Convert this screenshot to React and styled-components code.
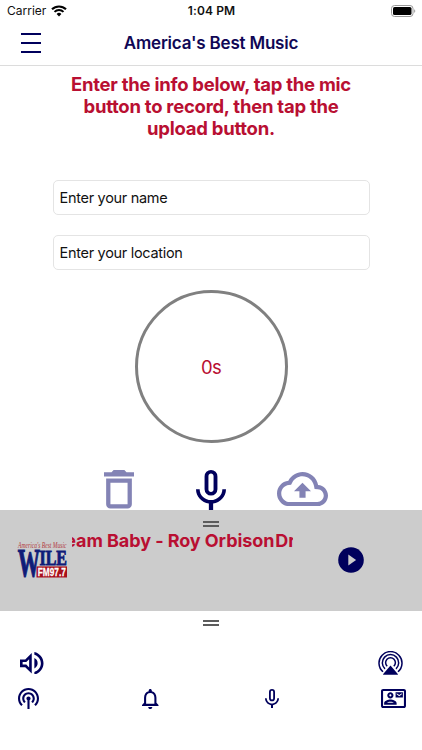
import React, { useState } from "react";
import styled, { createGlobalStyle } from "styled-components";

const navy = "#00005c";
const red = "#b90f32";

const GlobalStyle = createGlobalStyle`
  * {
    box-sizing: border-box;
  }

  body {
    margin: 0;
    background-color: #fff;
    font-family: Inter, "Liberation Sans", sans-serif;
  }
`;

const Icon = ({ d, box, width, height }) => (
  <svg viewBox={box} width={width} height={height} fill="currentColor" preserveAspectRatio="none">
    <path fillRule="evenodd" d={d} />
  </svg>
);

const micPath =
  "M17.3 11c0 3-2.54 5.1-5.3 5.1S6.7 14 6.7 11H5c0 3.41 2.72 6.23 6 6.72V21h2v-3.28c3.28-.49 6-3.31 6-6.72M10.8 4.9c0-.66.54-1.2 1.2-1.2s1.2.54 1.2 1.2l-.01 6.2c0 .66-.53 1.2-1.19 1.2s-1.2-.54-1.2-1.2M12 14a3 3 0 0 0 3-3V5a3 3 0 0 0-6 0v6a3 3 0 0 0 3 3z";
const trashPath =
  "M6 19c0 1.1.9 2 2 2h8c1.1 0 2-.9 2-2V7H6v12zM8 9h8v10H8V9zm7.5-5l-1-1h-5l-1 1H5v2h14V4z";
const uploadPath =
  "M19.35 10.04C18.67 6.59 15.64 4 12 4 9.11 4 6.6 5.64 5.35 8.04 2.34 8.36 0 10.91 0 14c0 3.31 2.69 6 6 6h13c2.76 0 5-2.24 5-5 0-2.64-2.05-4.78-4.65-4.96zM19 18H6c-2.21 0-4-1.79-4-4 0-2.05 1.53-3.76 3.56-3.97l1.07-.11.5-.95C8.08 7.14 9.94 6 12 6c2.62 0 4.88 1.86 5.39 4.43l.3 1.5 1.53.11c1.56.1 2.78 1.41 2.78 2.96 0 1.65-1.35 3-3 3zM8 13h2.55v3h2.9v-3H16l-4-4z";
const volumePath =
  "M3 9v6h4l5 5V4L7 9H3zm7-.17v6.34L7.83 13H5v-2h2.83L10 8.83zM16.5 12A4.5 4.5 0 0 0 14 7.97v8.05c1.48-.73 2.5-2.25 2.5-4.02zM14 3.23v2.06c2.89.86 5 3.54 5 6.71s-2.11 5.85-5 6.71v2.06c4.01-.91 7-4.49 7-8.77 0-4.28-2.99-7.86-7-8.77z";
const podcastPath =
  "M14 12c0 .74-.4 1.38-1 1.72V22h-2v-8.28c-.6-.35-1-.98-1-1.72 0-1.1.9-2 2-2s2 .9 2 2zm-2-6c-3.31 0-6 2.69-6 6 0 1.74.75 3.31 1.94 4.4l1.42-1.42C8.53 14.25 8 13.19 8 12c0-2.21 1.79-4 4-4s4 1.79 4 4c0 1.19-.53 2.25-1.36 2.98l1.42 1.42C17.25 15.31 18 13.74 18 12c0-3.31-2.69-6-6-6zm0-4C6.48 2 2 6.48 2 12c0 2.85 1.2 5.41 3.11 7.24l1.42-1.42C4.98 16.36 4 14.29 4 12c0-4.41 3.59-8 8-8s8 3.59 8 8c0 2.29-.98 4.36-2.53 5.82l1.42 1.42C20.8 17.41 22 14.85 22 12c0-5.52-4.48-10-10-10z";
const bellPath =
  "M12 22c1.1 0 2-.9 2-2h-4c0 1.1.9 2 2 2zm6-6v-5c0-3.07-1.63-5.64-4.5-6.32V4c0-.83-.67-1.5-1.5-1.5s-1.5.67-1.5 1.5v.68C7.64 5.36 6 7.92 6 11v5l-2 2v1h16v-1l-2-2zm-2 1H8v-6c0-2.48 1.51-4.5 4-4.5s4 2.02 4 4.5v6z";
const contactPath =
  "M22 3H2C.9 3 0 3.9 0 5v14c0 1.1.9 2 2 2h20c1.1 0 1.99-.9 1.99-2L24 5c0-1.1-.9-2-2-2zm0 16H2V5h20v14zM21 6h-7v5h7V6zm-1 2l-2.5 1.75L15 8V7l2.5 1.75L20 7v1zM9 12c1.65 0 3-1.35 3-3s-1.35-3-3-3-3 1.35-3 3 1.35 3 3 3zm0-4c.55 0 1 .45 1 1s-.45 1-1 1-1-.45-1-1 .45-1 1-1zm6 8.59c0-2.5-3.97-3.58-6-3.58s-6 1.08-6 3.58V18h12v-1.41zM5.48 16c.74-.5 2.22-1 3.52-1s2.77.49 3.52 1H5.48z";

const WifiIcon = () => (
  <svg width="16" height="12" viewBox="0 0 16 12" fill="none" stroke="#000">
    <path d="M1 4.3a10 10 0 0 1 14 0" strokeWidth="2.1" />
    <path d="M3.5 6.9a6.4 6.4 0 0 1 9 0" strokeWidth="2" />
    <path d="M8 11.4L5.6 9a3.5 3.5 0 0 1 4.8 0z" fill="#000" stroke="none" />
  </svg>
);

const BatteryIcon = () => (
  <svg width="25" height="12" viewBox="0 0 25 12">
    <rect x="0.5" y="0.5" width="21.5" height="11" rx="3" fill="#fff" stroke="#999" />
    <rect x="2" y="2" width="18.5" height="8" rx="1.6" fill="#000" />
    <path d="M23.2 4.2c1.4.5 1.4 3.1 0 3.6z" fill="#999" />
  </svg>
);

const AirplayIcon = () => (
  <svg width="25" height="24" viewBox="0 0 25 24" fill="none" stroke="currentColor" strokeWidth="1.5">
    <path d="M5 20.8a11.5 11.5 0 1 1 15 0" />
    <path d="M7 17.9a8.2 8.2 0 1 1 11 0" />
    <path d="M9.2 15.2a4.9 4.9 0 1 1 6.6 0" />
    <path d="M12.5 14.6l7.3 8.4a.4.4 0 0 1-.3.7h-14a.4.4 0 0 1-.3-.7z" fill="currentColor" stroke="none" />
  </svg>
);

const PlayIcon = () => (
  <svg width="26" height="26" viewBox="0 0 26 26">
    <circle cx="13" cy="13" r="12.8" fill={navy} />
    <path d="M10.3 7.4v11.2l7.8-5.6z" fill="#ccc" />
  </svg>
);

const StationLogo = () => (
  <svg width="52" height="40" viewBox="0 0 52 40" overflow="visible">
    <text x="1" y="6.8" fontFamily="Liberation Serif, serif" fontStyle="italic" fontSize="7.5" fill="#b23a40" textLength="48.5" lengthAdjust="spacingAndGlyphs">
      America's Best Music
    </text>
    <g fontFamily="Liberation Serif, serif" fontWeight="700" fill="#101c78" stroke="#101c78">
      <text transform="translate(0.8 35.4) scale(0.57 1)" fontSize="39" strokeWidth="1.2">W</text>
      <text x="22.5" y="23.6" fontSize="21.5" textLength="27.5" lengthAdjust="spacingAndGlyphs" strokeWidth="0.9">
        ILE
      </text>
    </g>
    <rect x="19.5" y="25.4" width="30.5" height="11.1" fill="#a80f1c" />
    <text x="20.8" y="35" fontFamily="Liberation Sans, sans-serif" fontWeight="700" fontSize="11.8" fill="#fff" stroke="#fff" strokeWidth="0.3" textLength="28" lengthAdjust="spacingAndGlyphs">
      FM97.7
    </text>
  </svg>
);

const App = () => {
  const [menu, setMenu] = useState(false);
  const song = "Dream Baby - Roy Orbison";

  return (
    <>
      <GlobalStyle />
      <Screen>
        <StatusBar>
          <Carrier>
            Carrier <WifiIcon />
          </Carrier>
          <Clock>1:04 PM</Clock>
          <Battery>
            <BatteryIcon />
          </Battery>
        </StatusBar>

        <Navbar>
          <MenuButton onClick={() => setMenu(!menu)} aria-expanded={menu}>
            <span />
            <span />
            <span />
          </MenuButton>
          <Title>America's Best Music</Title>
        </Navbar>

        <Recorder>
          <Info>
            Enter the info below, tap the mic
            <br />
            button to record, then tap the
            <br />
            upload button.
          </Info>
          <Field placeholder="Enter your name" />
          <Field placeholder="Enter your location" />
          <Timer>0s</Timer>
          <Actions>
            <ActionButton $faded $top="8px">
              <Icon d={trashPath} box="5 3 14 18" width="30" height="38.5" />
            </ActionButton>
            <ActionButton $top="7.5px">
              <Icon d={micPath} box="5 2 14 19" width="30" height="40.5" />
            </ActionButton>
            <ActionButton $faded $top="10px">
              <Icon d={uploadPath} box="0 4 24 16" width="51" height="34.3" />
            </ActionButton>
          </Actions>
        </Recorder>

        <Player>
          <Handle />
          <PlayerRow>
            <Logo>
              <StationLogo />
            </Logo>
            <Marquee>
              <Track>
                <span>{song}</span>
                <span>{song}</span>
              </Track>
            </Marquee>
            <PlayButton>
              <PlayIcon />
            </PlayButton>
          </PlayerRow>
        </Player>

        <Drawer>
          <Handle />
          <AudioRow>
            <Icon d={volumePath} box="3 3.23 18 17.54" width="23.5" height="22.6" />
            <AirplayIcon />
          </AudioRow>
          <TabRow>
            <Icon d={podcastPath} box="2 2 20 20" width="21" height="21" />
            <Icon d={bellPath} box="4 2.5 16 19.5" width="16.5" height="20" />
            <Icon d={micPath} box="5 2 14 19" width="14" height="19.5" />
            <Icon d={contactPath} box="0 3 24 18" width="25" height="19" />
          </TabRow>
        </Drawer>
      </Screen>
    </>
  );
};

const Screen = styled.div`
  display: flex;
  flex-direction: column;
  width: 422px;
  height: 750px;
  overflow: hidden;
  background-color: #fff;
`;

const StatusBar = styled.div`
  display: grid;
  grid-template-columns: 1fr auto 1fr;
  align-items: center;
  height: 21px;
  padding: 0 6px 0 7px;
  font-size: 12px;
  color: #111;
`;

const Carrier = styled.div`
  display: flex;
  align-items: center;
  gap: 5px;
`;

const Clock = styled.div`
  font-weight: 600;
  letter-spacing: 0.1px;
`;

const Battery = styled.div`
  display: flex;
  justify-content: flex-end;
`;

const Navbar = styled.header`
  display: grid;
  grid-template-columns: 62px 1fr 62px;
  align-items: center;
  height: 45px;
  padding-bottom: 1px;
  border-bottom: 1px solid #dcdcdc;
`;

const MenuButton = styled.button`
  display: flex;
  flex-direction: column;
  gap: 7px;
  width: 41px;
  padding: 0 0 0 21px;
  border: none;
  background: none;

  span {
    height: 2px;
    background-color: ${navy};
  }
`;

const Title = styled.h1`
  margin: 0;
  text-align: center;
  font-size: 17px;
  font-weight: 600;
  letter-spacing: -0.2px;
  color: #100755;
`;

const Recorder = styled.main`
  display: flex;
  flex-direction: column;
  align-items: center;
  height: 444px;
  padding-top: 7px;
`;

const Info = styled.p`
  margin: 0 0 41px;
  text-align: center;
  font-size: 18.5px;
  line-height: 22px;
  font-weight: 700;
  letter-spacing: -0.26px;
  color: ${red};
  white-space: nowrap;
`;

const Field = styled.input`
  flex: none;
  width: 317px;
  height: 35px;
  margin-bottom: 20px;
  padding: 0 6px;
  border: 1px solid #e4e4e4;
  border-radius: 5px;
  outline: none;
  font-family: inherit;
  font-size: 14.5px;
  letter-spacing: -0.3px;

  &::placeholder {
    color: #111;
    opacity: 1;
  }
`;

const Timer = styled.div`
  display: flex;
  flex: none;
  align-items: center;
  justify-content: center;
  width: 153px;
  height: 153px;
  border: 3px solid #808080;
  border-radius: 50%;
  font-size: 18.5px;
  letter-spacing: -0.7px;
  color: ${red};
`;

const Actions = styled.div`
  display: flex;
  flex: none;
  align-items: flex-start;
  gap: 51px;
  height: 48px;
  margin-top: 19px;
  padding-left: 10px;
`;

const ActionButton = styled.button`
  display: flex;
  padding: ${({ $top }) => $top} 0 0;
  border: none;
  background: none;
  color: ${({ $faded }) => ($faded ? "#8383b5" : navy)};

  &:first-child {
    margin-right: 11px;
  }
`;

const Handle = styled.div`
  width: 16px;
  height: 6px;
  margin: 0 auto;
  border: solid #5c5c5c;
  border-width: 2px 0;
`;

const Player = styled.section`
  height: 101px;
  padding-top: 10.5px;
  background-color: #ccc;
`;

const PlayerRow = styled.div`
  display: flex;
  align-items: flex-start;
  padding-left: 17px;
`;

const Logo = styled.div`
  width: 55px;
  margin-top: 14.5px;
`;

const Marquee = styled.div`
  display: flex;
  justify-content: flex-start;
  width: 220.5px;
  margin-top: 3.5px;
  overflow: hidden;
`;

const Track = styled.div`
  display: flex;
  flex: none;
  gap: 1px;
  margin-left: -26.5px;
  font-size: 18px;
  line-height: 22px;
  font-weight: 700;
  letter-spacing: -0.07px;
  color: ${red};
  white-space: nowrap;
`;

const PlayButton = styled.button`
  display: flex;
  margin: 20.5px 0 0 45.5px;
  padding: 0;
  border: none;
  background: none;
`;

const Drawer = styled.footer`
  padding-top: 9px;
  color: ${navy};
`;

const AudioRow = styled.div`
  display: flex;
  align-items: center;
  justify-content: space-between;
  height: 24px;
  margin-top: 25px;
  padding: 0 19px 0 20px;
`;

const TabRow = styled.nav`
  display: grid;
  grid-template-columns: 124px 123px 116px 25px;
  align-items: center;
  height: 21px;
  margin-top: 13px;
  padding-left: 18px;
`;

export default App;
